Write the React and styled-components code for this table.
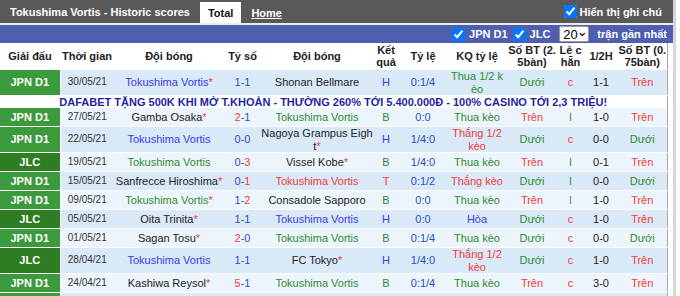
import React from 'react'
import styled, { createGlobalStyle } from 'styled-components'
import { ChevronDown } from 'lucide-react'

const GlobalStyle = createGlobalStyle`
  html, body {
    margin: 0;
    padding: 0;
    background: #fff;
  }
  body {
    font-family: "Liberation Sans", Arial, sans-serif;
    font-size: 11px;
    overflow: hidden;
  }
`

const COLORS = {
  blue: '#3a3aee',
  green: '#2e8b2e',
  red: '#f23a3a',
  score: '#2b4fc0',
  text: '#222',
}

const headers = [
  'Giải đấu', 'Thời gian', 'Đội bóng', 'Tỷ số', 'Đội bóng', 'Kết\nquả',
  'Tỷ lệ', 'KQ tỷ lệ', 'Số BT (2.\n5bàn)', 'Lẻ c\nhẵn', '1/2H', 'Số BT (0.\n75bàn)',
]
const widths = [60, 54, 110, 37, 112, 26, 48, 60, 50, 27, 34, 49]

const resColor = { H: COLORS.blue, B: COLORS.green, T: COLORS.red }

const matches = [
  { lg: 'JPN D1', date: '30/05/21', home: 'Tokushima Vortis', hs: true, score: [1, 1], away: 'Shonan Bellmare', us: 'home', res: 'H', hcp: '0:1/4', kq: 'Thua 1/2 k\nèo', bt: 'Dưới', lc: 'c', half: '1-1', bt2: 'Trên' },
  'ad',
  { lg: 'JPN D1', date: '27/05/21', home: 'Gamba Osaka', hs: true, score: [2, 1], away: 'Tokushima Vortis', us: 'away', res: 'B', hcp: '0:0', kq: 'Thua kèo', bt: 'Trên', lc: 'l', half: '1-0', bt2: 'Trên' },
  { lg: 'JPN D1', date: '22/05/21', home: 'Tokushima Vortis', score: [0, 0], away: 'Nagoya Grampus Eigh\nt', as: true, us: 'home', res: 'H', hcp: '1/4:0', kq: 'Thắng 1/2\nkèo', bt: 'Dưới', lc: 'c', half: '0-0', bt2: 'Dưới' },
  { lg: 'JLC', date: '19/05/21', home: 'Tokushima Vortis', score: [0, 3], away: 'Vissel Kobe', as: true, us: 'home', res: 'B', hcp: '1/4:0', kq: 'Thua kèo', bt: 'Trên', lc: 'l', half: '0-1', bt2: 'Trên' },
  { lg: 'JPN D1', date: '15/05/21', home: 'Sanfrecce Hiroshima', hs: true, score: [0, 1], away: 'Tokushima Vortis', us: 'away', res: 'T', hcp: '0:1/2', kq: 'Thắng kèo', bt: 'Dưới', lc: 'l', half: '0-0', bt2: 'Dưới' },
  { lg: 'JPN D1', date: '09/05/21', home: 'Tokushima Vortis', hs: true, score: [1, 2], away: 'Consadole Sapporo', us: 'home', res: 'B', hcp: '0:0', kq: 'Thua kèo', bt: 'Trên', lc: 'l', half: '1-0', bt2: 'Trên' },
  { lg: 'JLC', date: '05/05/21', home: 'Oita Trinita', hs: true, score: [1, 1], away: 'Tokushima Vortis', us: 'away', res: 'H', hcp: '0:0', kq: 'Hòa', bt: 'Dưới', lc: 'c', half: '1-0', bt2: 'Trên' },
  { lg: 'JPN D1', date: '01/05/21', home: 'Sagan Tosu', hs: true, score: [2, 0], away: 'Tokushima Vortis', us: 'away', res: 'B', hcp: '0:1/4', kq: 'Thua kèo', bt: 'Dưới', lc: 'c', half: '0-0', bt2: 'Dưới' },
  { lg: 'JLC', date: '28/04/21', home: 'Tokushima Vortis', score: [1, 1], away: 'FC Tokyo', as: true, us: 'home', res: 'H', hcp: '1/4:0', kq: 'Thắng 1/2\nkèo', bt: 'Dưới', lc: 'c', half: '1-0', bt2: 'Trên' },
  { lg: 'JPN D1', date: '24/04/21', home: 'Kashiwa Reysol', hs: true, score: [5, 1], away: 'Tokushima Vortis', us: 'away', res: 'B', hcp: '0:1/4', kq: 'Thua kèo', bt: 'Trên', lc: 'c', half: '3-0', bt2: 'Trên' },
  { lg: 'JPN D1', date: '17/04/21', home: 'Tokushima Vortis', score: [1, 0], away: 'Yokohama FC', as: true, us: 'home', res: 'T', hcp: '0:1', kq: 'Hòa', bt: 'Dưới', lc: 'l', half: '0-0', bt2: 'Dưới' },
]

const kqColor = (kq) => (kq.startsWith('Thắng') ? COLORS.red : kq.startsWith('Thua') ? COLORS.green : COLORS.blue)
const ouColor = (v) => (v === 'Trên' ? COLORS.red : COLORS.green)

const Panel = styled.div`
  width: 673px;
  border-right: 3px solid #d6d6d6;
`

const TopBar = styled.div`
  display: flex;
  align-items: stretch;
  height: 23px;
  padding-left: 10px;
  background: #595959;
  border-bottom: 2px solid #ececec;
  color: #fff;
  font-weight: bold;
`

const Title = styled.div`
  display: flex;
  align-items: center;
`

const Tab = styled.div`
  display: flex;
  align-items: center;
  margin: 2px 0 0 10px;
  padding: ${({ $active }) => ($active ? '0 8px' : '0')};
  background: ${({ $active }) => ($active ? '#fff' : 'transparent')};
  color: ${({ $active }) => ($active ? '#111' : '#fff')};
  text-decoration: ${({ $active }) => ($active ? 'none' : 'underline')};
`

const NoteToggle = styled.label`
  display: flex;
  align-items: center;
  gap: 1px;
  margin-left: auto;
  padding-right: 11px;
`

const Check = styled.input.attrs({ type: 'checkbox', defaultChecked: true })`
  width: 13px;
  height: 13px;
  margin: 0 2px 0 0;
`

const FilterBar = styled.div`
  display: flex;
  justify-content: flex-end;
  align-items: center;
  height: 18px;
  padding-right: 6px;
  background: #4d5fae;
  color: #fff;
  font-weight: bold;
`

const FilterItem = styled.label`
  display: flex;
  align-items: center;
  gap: 2px;
  margin-right: ${({ $gap }) => $gap}px;
`

const SelectBox = styled.div`
  display: flex;
  align-items: center;
  justify-content: space-between;
  width: 23px;
  height: 14px;
  padding: 0 2px 0 3px;
  margin-right: 8px;
  background: #fff;
  border: 1px solid #9a9a9a;
  border-radius: 2px;
  color: #000;
  font-weight: normal;
  font-size: 13px;
`

const Table = styled.table`
  width: 667px;
  table-layout: fixed;
  border-collapse: collapse;
  border-right: 1px solid #a8a8a8;
  font-size: 11px;
  line-height: 12.5px;
  color: ${COLORS.text};
`

const Th = styled.th`
  height: 26px;
  padding: 0;
  background: #fff;
  border-bottom: 1px solid #fff;
  font-weight: bold;
  color: #222;
  white-space: pre;
  vertical-align: middle;
`

const Row = styled.tr`
  background: ${({ $alt }) => ($alt ? '#edf5fc' : '#d9e9f8')};
`

const Td = styled.td`
  height: 18px;
  padding: 0;
  text-align: center;
  vertical-align: middle;
  white-space: pre;
  overflow: hidden;
  border-bottom: 1px solid #fff;
  font-size: ${({ $size }) => $size || 11}px;
  color: ${({ $color }) => $color || COLORS.text};
`

const LeagueCell = styled(Td)`
  background: ${({ $league }) => ($league === 'JLC' ? '#2f7d22' : '#3b9a3b')};
  border-right: 1px solid #fff;
  color: #fff;
  font-weight: bold;
`

const AdCell = styled.td`
  height: 12px;
  padding: 0;
  line-height: 12px;
  background: #fff;
  text-align: center;
  color: #1f1fa5;
  font-weight: bold;
  font-size: 11px;
  white-space: nowrap;
`

const Star = styled.span`
  color: ${COLORS.red};
`

const Goal = styled.span`
  color: ${({ $win }) => ($win ? COLORS.red : COLORS.score)};
`

const Team = ({ name, star, color }) => (
  <Td $color={color}>
    {name}
    {star && <Star>*</Star>}
  </Td>
)

const Score = ({ score: [h, a] }) => (
  <Td>
    <Goal $win={h > a}>{h}</Goal>
    <Goal>-</Goal>
    <Goal $win={a > h}>{a}</Goal>
  </Td>
)

export default function App() {
  let n = 0
  return (
    <>
      <GlobalStyle />
      <Panel>
        <TopBar>
          <Title>Tokushima Vortis - Historic scores</Title>
          <Tab $active>Total</Tab>
          <Tab>Home</Tab>
          <NoteToggle>
            <Check />
            Hiển thị ghi chú
          </NoteToggle>
        </TopBar>
        <FilterBar>
          <FilterItem $gap={5}>
            <Check />
            JPN D1
          </FilterItem>
          <FilterItem $gap={9}>
            <Check />
            JLC
          </FilterItem>
          <SelectBox>
            20
            <ChevronDown size={11} strokeWidth={3.5} />
          </SelectBox>
          trận gần nhất
        </FilterBar>
        <Table>
          <colgroup>
            {widths.map((w, i) => (
              <col key={i} style={{ width: w }} />
            ))}
          </colgroup>
          <thead>
            <tr>
              {headers.map((h, i) => (
                <Th key={i}>{h}</Th>
              ))}
            </tr>
          </thead>
          <tbody>
            {matches.map((m, i) => {
              if (m === 'ad') {
                return (
                  <tr key={i}>
                    <AdCell colSpan={12}>
                      DAFABET TẶNG 500K KHI MỞ T.KHOẢN - THƯỜNG 260% TỚI 5.400.000Đ - 100% CASINO TỚI 2,3 TRIỆU!
                    </AdCell>
                  </tr>
                )
              }
              const alt = n++ % 2 === 1
              const c = resColor[m.res]
              return (
                <Row key={i} $alt={alt}>
                  <LeagueCell $league={m.lg}>{m.lg}</LeagueCell>
                  <Td $color="#333" $size={10}>{m.date}</Td>
                  <Team name={m.home} star={m.hs} color={m.us === 'home' ? c : undefined} />
                  <Score score={m.score} />
                  <Team name={m.away} star={m.as} color={m.us === 'away' ? c : undefined} />
                  <Td $color={c}>{m.res}</Td>
                  <Td $color={COLORS.score}>{m.hcp}</Td>
                  <Td $color={kqColor(m.kq)}>{m.kq}</Td>
                  <Td $color={ouColor(m.bt)}>{m.bt}</Td>
                  <Td $color={m.lc === 'c' ? COLORS.red : COLORS.green}>{m.lc}</Td>
                  <Td>{m.half}</Td>
                  <Td $color={ouColor(m.bt2)}>{m.bt2}</Td>
                </Row>
              )
            })}
          </tbody>
        </Table>
      </Panel>
    </>
  )
}
